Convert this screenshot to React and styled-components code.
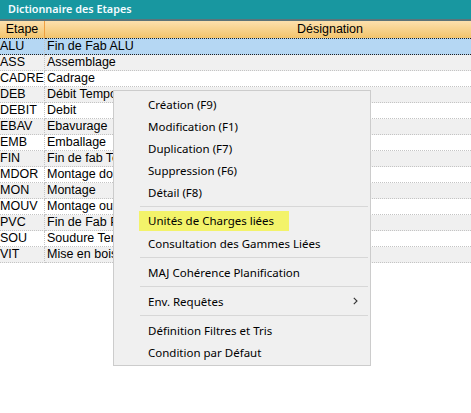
import React from 'react';
import styled, { createGlobalStyle } from 'styled-components';

const GlobalStyle = createGlobalStyle`
	html, body {
		margin: 0;
		padding: 0;
		background: #ffffff;
	}
	body {
		width: 471px;
		height: 413px;
		overflow: hidden;
	}
`;

const Wrapper = styled.div`
	position: relative;
	width: 471px;
	height: 413px;
	overflow: hidden;
	background: #ffffff;
`;

const TitleBar = styled.div`
	height: 19px;
	background-color: #1897a0;
	border-bottom: 2px solid #5d7378;
	color: #f4fbff;
	font-family: "Noto Sans", "Open Sans", sans-serif;
	font-size: 10.8px;
	font-weight: 600;
	line-height: 18px;
	padding-left: 8px;
	white-space: nowrap;
`;

const Grid = styled.div`
	display: grid;
	grid-template-columns: 45px 570px;
	width: 615px;
`;

const HeadCell = styled.div`
	height: 17px;
	border-bottom: 1px solid #f0a040;
	border-right: ${(p) => (p.$first ? '1px solid #f0a040' : 'none')};
	background: linear-gradient(#fce0ad, #f3c46c);
	font-family: "Liberation Sans Narrow", "Liberation Sans", sans-serif;
	font-size: 12.5px;
	line-height: 17px;
	text-align: center;
	color: #000;
`;

const Cell = styled.div`
	height: 15px;
	line-height: 15px;
	padding-left: ${(p) => (p.$first ? '0' : '2px')};
	background: ${(p) => (p.$selected ? '#b5d7f3' : p.$odd ? '#f0f0f0' : '#ffffff')};
	border-bottom: 1px dotted ${(p) => (p.$selected ? '#202020' : '#c4c4c4')};
	border-right: ${(p) => (p.$first ? '1px dotted #c4c4c4' : 'none')};
	border-top: ${(p) => (p.$selected ? '1px dotted #202020' : 'none')};
	margin-top: ${(p) => (p.$selected ? '-1px' : '0')};
	font-family: "Liberation Sans Narrow", "Liberation Sans", sans-serif;
	font-size: 12.5px;
	color: #000;
	white-space: nowrap;
	overflow: hidden;
`;

const Menu = styled.div`
	position: absolute;
	left: 113px;
	top: 90px;
	width: 256px;
	padding: 2px 0;
	background: #f0f0f0;
	border: 1px solid #cccccc;
	font-family: "Noto Sans", "Open Sans", sans-serif;
	font-size: 11.5px;
	color: #000;
`;

const Item = styled.div`
	display: flex;
	align-items: center;
	justify-content: space-between;
	height: 22px;
	padding: 0 12px 0 34px;
	white-space: nowrap;
`;

const Marker = styled.span`
	display: inline-block;
	height: 20px;
	line-height: 20px;
	margin-left: -9px;
	padding: 0 15px 0 9px;
	background: #f3f36a;
`;

const Separator = styled.div`
	height: 1px;
	margin: 3px 2px 3px 26px;
	background: #d7d7d7;
`;

const rows = [
	['ALU', 'Fin de Fab ALU'],
	['ASS', 'Assemblage'],
	['CADRE', 'Cadrage'],
	['DEB', 'Débit Tempo'],
	['DEBIT', 'Debit'],
	['EBAV', 'Ebavurage'],
	['EMB', 'Emballage'],
	['FIN', 'Fin de fab Tempo'],
	['MDOR', 'Montage dormant'],
	['MON', 'Montage'],
	['MOUV', 'Montage ouvrant'],
	['PVC', 'Fin de Fab PVC'],
	['SOU', 'Soudure Tempo'],
	['VIT', 'Mise en bois et vitrage'],
];

const menu = [
	'Création (F9)',
	'Modification (F1)',
	'Duplication (F7)',
	'Suppression (F6)',
	'Détail (F8)',
	'-',
	'*Unités de Charges liées',
	'Consultation des Gammes Liées',
	'-',
	'MAJ Cohérence Planification',
	'-',
	'>Env. Requêtes',
	'-',
	'Définition Filtres et Tris',
	'Condition par Défaut',
];

const Chevron = () => (
	<svg width="5" height="8" viewBox="0 0 5 8">
		<path d="M0.8 0.8 L4 4 L0.8 7.2" fill="none" stroke="#333" strokeWidth="1.1" />
	</svg>
);

const App = () => {
	return (
		<Wrapper>
			<GlobalStyle />
			<TitleBar>Dictionnaire des Etapes</TitleBar>
			<Grid>
				<HeadCell $first>Etape</HeadCell>
				<HeadCell>Désignation</HeadCell>
				{rows.map(([code, label], i) => (
					<React.Fragment key={code}>
						<Cell $first $selected={i === 0} $odd={i % 2 === 1}>{code}</Cell>
						<Cell $selected={i === 0} $odd={i % 2 === 1}>{label}</Cell>
					</React.Fragment>
				))}
			</Grid>

			<Menu>
				{menu.map((m, i) => {
					if (m === '-') return <Separator key={i} />;
					if (m[0] === '*') return <Item key={i}><Marker>{m.slice(1)}</Marker></Item>;
					if (m[0] === '>') return <Item key={i}><span>{m.slice(1)}</span><Chevron /></Item>;
					return <Item key={i}>{m}</Item>;
				})}
			</Menu>
		</Wrapper>
	);
};

export default App;
